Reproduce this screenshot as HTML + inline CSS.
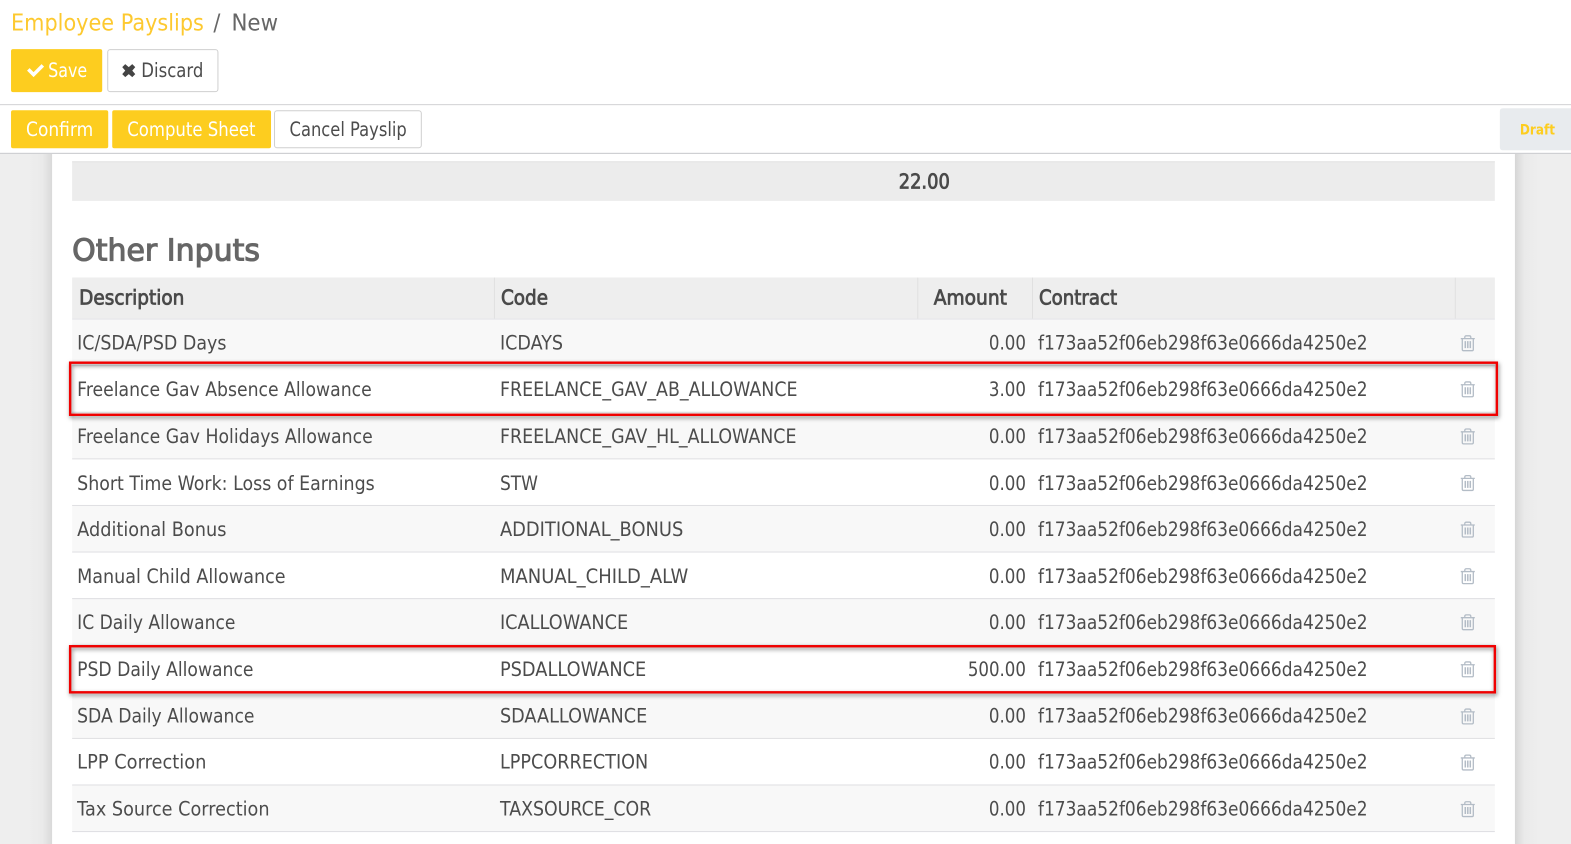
<!DOCTYPE html>
<html lang="en">
<head>
<meta charset="utf-8">
<title>Employee Payslips / New</title>
<style>
html,body{margin:0;padding:0;background:#fff;width:1571px;height:844px;overflow:hidden}
svg{display:block}
text{font-family:"DejaVu Sans","Liberation Sans",sans-serif;font-size:19.800px;fill:#4c4c4c}
.b{font-weight:bold}
.h{font-size:20px;fill:#4a4a4a;stroke:#4a4a4a;stroke-width:.8px}
.w{fill:#fff}
.y{fill:#fdc92f}
.line{fill:#dfdfe2}
</style>
</head>
<body>
<svg width="1571" height="844" viewBox="0 0 1568 842.4" xmlns="http://www.w3.org/2000/svg">
<defs>
<linearGradient id="gl" x1="0" x2="1" y1="0" y2="0"><stop offset="0" stop-color="#eeeeee"/><stop offset="0.6" stop-color="#eaeaea"/><stop offset="1" stop-color="#d9d9d9"/></linearGradient>
<linearGradient id="gr" x1="0" x2="1" y1="0" y2="0"><stop offset="0" stop-color="#d6d6d6"/><stop offset="0.4" stop-color="#eaeaea"/><stop offset="1" stop-color="#eeeeee"/></linearGradient>
<g id="t" fill="none" stroke="#b3bcc6" stroke-width="1.3">
<path d="M.5 3.5h14M4.5 3.5V2.2Q4.5.7 6 .7h3q1.500 0 1.500 1.500v1.300M2 3.500v10.800q0 1.200 1.200 1.200h8.600q1.200 0 1.200-1.200V3.500"/>
<path d="M5 6v7M7.500 6v7M10 6v7" stroke-width="1.500"/>
</g>
</defs>

<rect width="1568" height="843" fill="#fff"/>
<rect y="153" width="1568" height="690" fill="#eeeeee"/>
<rect x="28" y="153" width="24" height="690" fill="url(#gl)"/>
<rect x="1512" y="153" width="24" height="690" fill="url(#gr)"/>
<rect x="52" y="153" width="1460" height="690" fill="#fff"/>

<!-- top bars -->
<rect y="0" width="1568" height="104" fill="#fff"/>
<rect y="104" width="1568" height="1.200" fill="#cfcfd2"/>
<rect y="105" width="1568" height="48" fill="#fff"/>
<rect y="152.500" width="1568" height="1.200" fill="#cfd0d3"/>

<!-- breadcrumb -->
<text x="11" y="30.500" class="y" style="font-size:23.500px" textLength="192.500" lengthAdjust="spacingAndGlyphs">Employee Payslips</text>
<text x="213" y="30.500" style="font-size:23.500px;fill:#666" textLength="7" lengthAdjust="spacingAndGlyphs">/</text>
<text x="231" y="30.500" style="font-size:23.500px;fill:#666" textLength="46.500" lengthAdjust="spacingAndGlyphs">New</text>

<!-- save / discard -->
<rect x="11" y="49" width="91" height="43" rx="2" fill="#fdcd1f"/>
<path d="M27 70.500l2.500-2.500 4 4 8-8 2.500 2.500-10.500 10.500z" fill="#fff"/>
<text x="48" y="77" class="w" textLength="39" lengthAdjust="spacingAndGlyphs">Save</text>
<rect x="107.500" y="49.500" width="110" height="42" rx="2.500" fill="#fff" stroke="#cfcfcf"/>
<path d="M125 64l3.500 3 3.500-3 3 3-3 3.500 3 3.500-3 3-3.500-3-3.500 3-3-3 3-3.500-3-3.500z" fill="#444"/>
<text x="141" y="77" textLength="62" lengthAdjust="spacingAndGlyphs">Discard</text>

<!-- action buttons -->
<rect x="11" y="110" width="97" height="38" rx="2" fill="#fdcd1f"/>
<text x="26" y="135.500" class="w" textLength="67" lengthAdjust="spacingAndGlyphs">Confirm</text>
<rect x="112" y="110" width="158.500" height="38" rx="2" fill="#fdcd1f"/>
<text x="127" y="135.500" class="w" textLength="128" lengthAdjust="spacingAndGlyphs">Compute Sheet</text>
<rect x="274" y="110.500" width="146.500" height="37" rx="2.500" fill="#fff" stroke="#cfcfcf"/>
<text x="289" y="135.500" textLength="117" lengthAdjust="spacingAndGlyphs">Cancel Payslip</text>
<path d="M1568 108h-68q-3 0-3 3v36q0 3 3 3h68z" fill="#e8ebee"/>
<text x="1517" y="134" class="b" style="font-size:14.500px;fill:#fdcd1f" textLength="35" lengthAdjust="spacingAndGlyphs">Draft</text>

<!-- total bar -->
<rect x="72" y="161" width="1420" height="39.500" fill="#ececec"/>
<rect x="72" y="161" width="1420" height="1" fill="#e2e2e2"/>
<text x="897" y="188" class="h" textLength="51" lengthAdjust="spacingAndGlyphs">22.00</text>

<text x="72" y="260" style="font-size:30px;fill:#666;stroke:#666;stroke-width:1.100px" textLength="187.500" lengthAdjust="spacingAndGlyphs">Other Inputs</text>

<!-- table header -->
<rect x="72" y="277" width="1420" height="41" fill="#eeeeee"/>
<rect x="72" y="318" width="1420" height="1" fill="#dfe1e6"/>
<rect x="493" y="277" width="1" height="41" fill="#e0e0e0"/>
<rect x="915.500" y="277" width="1" height="41" fill="#e0e0e0"/>
<rect x="1030" y="277" width="1" height="41" fill="#e0e0e0"/>
<rect x="1452" y="277" width="1" height="41" fill="#e0e0e0"/>
<text x="79" y="304" class="h" textLength="105" lengthAdjust="spacingAndGlyphs">Description</text>
<text x="500" y="304" class="h" textLength="47" lengthAdjust="spacingAndGlyphs">Code</text>
<text x="932" y="304" class="h" textLength="73" lengthAdjust="spacingAndGlyphs">Amount</text>
<text x="1037" y="304" class="h" textLength="78" lengthAdjust="spacingAndGlyphs">Contract</text>

<!-- row stripes -->
<g fill="#f8f8f8">
<rect x="72" y="319" width="1420" height="46"/>
<rect x="72" y="411" width="1420" height="47"/>
<rect x="72" y="504" width="1420" height="47"/>
<rect x="72" y="597" width="1420" height="47"/>
<rect x="72" y="690" width="1420" height="47"/>
<rect x="72" y="783" width="1420" height="47"/>
</g>
<g class="line">
<rect x="72" y="364.500" width="1420" height="1"/>
<rect x="72" y="411" width="1420" height="1"/>
<rect x="72" y="457.500" width="1420" height="1"/>
<rect x="72" y="504" width="1420" height="1"/>
<rect x="72" y="550.500" width="1420" height="1"/>
<rect x="72" y="597" width="1420" height="1"/>
<rect x="72" y="643.500" width="1420" height="1"/>
<rect x="72" y="690" width="1420" height="1"/>
<rect x="72" y="736.500" width="1420" height="1"/>
<rect x="72" y="783" width="1420" height="1"/>
<rect x="72" y="829.500" width="1420" height="1"/>
</g>

<!-- rows -->
<text x="77" y="349" textLength="149" lengthAdjust="spacingAndGlyphs">IC/SDA/PSD Days</text>
<text x="499" y="349" textLength="63" lengthAdjust="spacingAndGlyphs">ICDAYS</text>
<text x="987" y="349" textLength="37" lengthAdjust="spacingAndGlyphs">0.00</text>
<text x="1036" y="349" textLength="329" lengthAdjust="spacingAndGlyphs">f173aa52f06eb298f63e0666da4250e2</text>
<use href="#t" x="1457.500" y="334.500"/>

<text x="77" y="395" textLength="294" lengthAdjust="spacingAndGlyphs">Freelance Gav Absence Allowance</text>
<text x="499" y="395" textLength="297" lengthAdjust="spacingAndGlyphs">FREELANCE_GAV_AB_ALLOWANCE</text>
<text x="987" y="395" textLength="37" lengthAdjust="spacingAndGlyphs">3.00</text>
<text x="1036" y="395" textLength="329" lengthAdjust="spacingAndGlyphs">f173aa52f06eb298f63e0666da4250e2</text>
<use href="#t" x="1457.500" y="380.500"/>

<text x="77" y="442" textLength="295" lengthAdjust="spacingAndGlyphs">Freelance Gav Holidays Allowance</text>
<text x="499" y="442" textLength="296" lengthAdjust="spacingAndGlyphs">FREELANCE_GAV_HL_ALLOWANCE</text>
<text x="987" y="442" textLength="37" lengthAdjust="spacingAndGlyphs">0.00</text>
<text x="1036" y="442" textLength="329" lengthAdjust="spacingAndGlyphs">f173aa52f06eb298f63e0666da4250e2</text>
<use href="#t" x="1457.500" y="427.500"/>

<text x="77" y="489" textLength="297" lengthAdjust="spacingAndGlyphs">Short Time Work: Loss of Earnings</text>
<text x="499" y="489" textLength="38" lengthAdjust="spacingAndGlyphs">STW</text>
<text x="987" y="489" textLength="37" lengthAdjust="spacingAndGlyphs">0.00</text>
<text x="1036" y="489" textLength="329" lengthAdjust="spacingAndGlyphs">f173aa52f06eb298f63e0666da4250e2</text>
<use href="#t" x="1457.500" y="474"/>

<text x="77" y="535" textLength="149" lengthAdjust="spacingAndGlyphs">Additional Bonus</text>
<text x="499" y="535" textLength="183" lengthAdjust="spacingAndGlyphs">ADDITIONAL_BONUS</text>
<text x="987" y="535" textLength="37" lengthAdjust="spacingAndGlyphs">0.00</text>
<text x="1036" y="535" textLength="329" lengthAdjust="spacingAndGlyphs">f173aa52f06eb298f63e0666da4250e2</text>
<use href="#t" x="1457.500" y="520.500"/>

<text x="77" y="582" textLength="208" lengthAdjust="spacingAndGlyphs">Manual Child Allowance</text>
<text x="499" y="582" textLength="188" lengthAdjust="spacingAndGlyphs">MANUAL_CHILD_ALW</text>
<text x="987" y="582" textLength="37" lengthAdjust="spacingAndGlyphs">0.00</text>
<text x="1036" y="582" textLength="329" lengthAdjust="spacingAndGlyphs">f173aa52f06eb298f63e0666da4250e2</text>
<use href="#t" x="1457.500" y="567"/>

<text x="77" y="628" textLength="158" lengthAdjust="spacingAndGlyphs">IC Daily Allowance</text>
<text x="499" y="628" textLength="128" lengthAdjust="spacingAndGlyphs">ICALLOWANCE</text>
<text x="987" y="628" textLength="37" lengthAdjust="spacingAndGlyphs">0.00</text>
<text x="1036" y="628" textLength="329" lengthAdjust="spacingAndGlyphs">f173aa52f06eb298f63e0666da4250e2</text>
<use href="#t" x="1457.500" y="613"/>

<text x="77" y="674.500" textLength="176" lengthAdjust="spacingAndGlyphs">PSD Daily Allowance</text>
<text x="499" y="674.500" textLength="146" lengthAdjust="spacingAndGlyphs">PSDALLOWANCE</text>
<text x="966" y="674.500" textLength="58" lengthAdjust="spacingAndGlyphs">500.00</text>
<text x="1036" y="674.500" textLength="329" lengthAdjust="spacingAndGlyphs">f173aa52f06eb298f63e0666da4250e2</text>
<use href="#t" x="1457.500" y="660"/>

<text x="77" y="721" textLength="177" lengthAdjust="spacingAndGlyphs">SDA Daily Allowance</text>
<text x="499" y="721" textLength="147" lengthAdjust="spacingAndGlyphs">SDAALLOWANCE</text>
<text x="987" y="721" textLength="37" lengthAdjust="spacingAndGlyphs">0.00</text>
<text x="1036" y="721" textLength="329" lengthAdjust="spacingAndGlyphs">f173aa52f06eb298f63e0666da4250e2</text>
<use href="#t" x="1457.500" y="707"/>

<text x="77" y="767" textLength="129" lengthAdjust="spacingAndGlyphs">LPP Correction</text>
<text x="499" y="767" textLength="148" lengthAdjust="spacingAndGlyphs">LPPCORRECTION</text>
<text x="987" y="767" textLength="37" lengthAdjust="spacingAndGlyphs">0.00</text>
<text x="1036" y="767" textLength="329" lengthAdjust="spacingAndGlyphs">f173aa52f06eb298f63e0666da4250e2</text>
<use href="#t" x="1457.500" y="753"/>

<text x="77" y="814" textLength="192" lengthAdjust="spacingAndGlyphs">Tax Source Correction</text>
<text x="499" y="814" textLength="151" lengthAdjust="spacingAndGlyphs">TAXSOURCE_COR</text>
<text x="987" y="814" textLength="37" lengthAdjust="spacingAndGlyphs">0.00</text>
<text x="1036" y="814" textLength="329" lengthAdjust="spacingAndGlyphs">f173aa52f06eb298f63e0666da4250e2</text>
<use href="#t" x="1457.500" y="799.500"/>

<!-- red highlight boxes -->
<g fill="none" stroke="#f00000" stroke-width="2.400" style="filter:drop-shadow(1.500px 2px 2px rgba(0,0,0,.5))">
<rect x="70" y="362" width="1424" height="52"/>
<rect x="70" y="645" width="1422" height="46"/>
</g>
</svg>
</body>
</html>
